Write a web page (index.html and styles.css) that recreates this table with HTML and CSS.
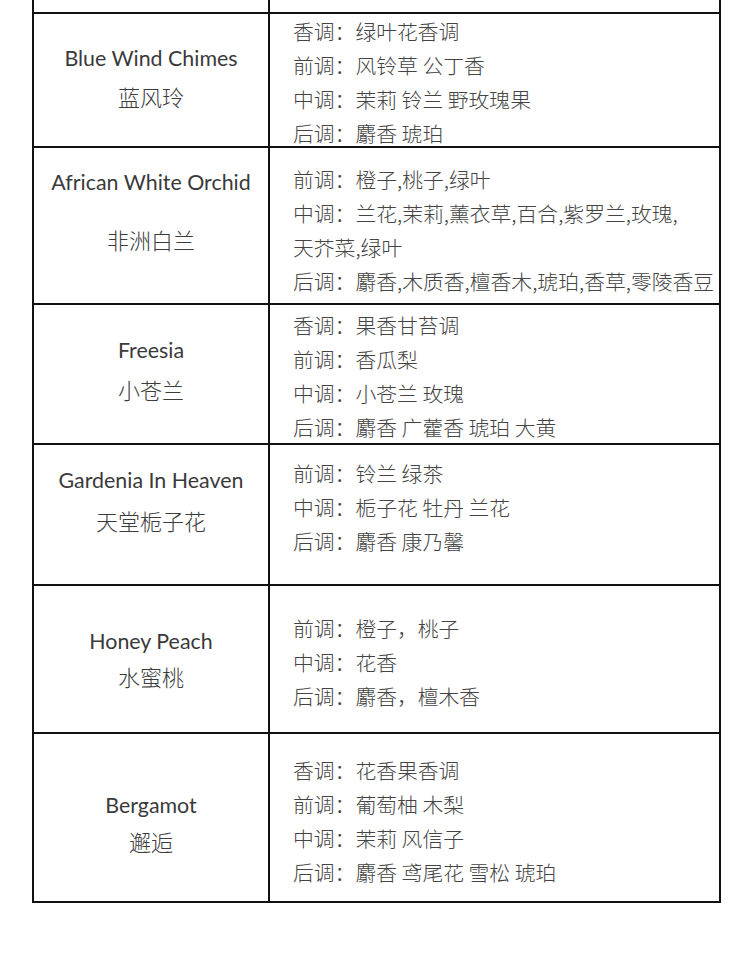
FILE: index.html
```html
<!DOCTYPE html>
<html lang="zh-CN">
<head>
<meta charset="utf-8">
<title>香调表</title>
<link rel="stylesheet" href="styles.css">
</head>
<body>
<div class="table">
  <div class="row row-0">
    <div class="name"></div>
    <div class="notes"></div>
  </div>
  <div class="row row-1">
    <div class="name">
      <div class="en">Blue Wind Chimes</div>
      <div class="zh">蓝风玲</div>
    </div>
    <div class="notes">
      <div class="line">香调：绿叶花香调</div>
      <div class="line">前调：风铃草 公丁香</div>
      <div class="line">中调：茉莉 铃兰 野玫瑰果</div>
      <div class="line">后调：麝香 琥珀</div>
    </div>
  </div>
  <div class="row row-2">
    <div class="name">
      <div class="en">African White Orchid</div>
      <div class="zh">非洲白兰</div>
    </div>
    <div class="notes">
      <div class="line">前调：橙子,桃子,绿叶</div>
      <div class="line">中调：兰花,茉莉,薰衣草,百合,紫罗兰,玫瑰,</div>
      <div class="line">天芥菜,绿叶</div>
      <div class="line">后调：麝香,木质香,檀香木,琥珀,香草,零陵香豆</div>
    </div>
  </div>
  <div class="row row-3">
    <div class="name">
      <div class="en">Freesia</div>
      <div class="zh">小苍兰</div>
    </div>
    <div class="notes">
      <div class="line">香调：果香甘苔调</div>
      <div class="line">前调：香瓜梨</div>
      <div class="line">中调：小苍兰 玫瑰</div>
      <div class="line">后调：麝香 广藿香 琥珀 大黄</div>
    </div>
  </div>
  <div class="row row-4">
    <div class="name">
      <div class="en">Gardenia In Heaven</div>
      <div class="zh">天堂栀子花</div>
    </div>
    <div class="notes">
      <div class="line">前调：铃兰 绿茶</div>
      <div class="line">中调：栀子花 牡丹 兰花</div>
      <div class="line">后调：麝香 康乃馨</div>
    </div>
  </div>
  <div class="row row-5">
    <div class="name">
      <div class="en">Honey Peach</div>
      <div class="zh">水蜜桃</div>
    </div>
    <div class="notes">
      <div class="line">前调：橙子，桃子</div>
      <div class="line">中调：花香</div>
      <div class="line">后调：麝香，檀木香</div>
    </div>
  </div>
  <div class="row row-6">
    <div class="name">
      <div class="en">Bergamot</div>
      <div class="zh">邂逅</div>
    </div>
    <div class="notes">
      <div class="line">香调：花香果香调</div>
      <div class="line">前调：葡萄柚 木梨</div>
      <div class="line">中调：茉莉 风信子</div>
      <div class="line">后调：麝香 鸢尾花 雪松 琥珀</div>
    </div>
  </div>
</div>
</body>
</html>
```

FILE: styles.css
```css
html, body {
  margin: 0;
  padding: 0;
  background: #ffffff;
}

body {
  font-family: "Lato", "Noto Sans CJK SC", sans-serif;
  width: 750px;
  height: 956px;
  overflow: hidden;
}

.table {
  margin-left: 32px;
  width: 689px;
  box-sizing: border-box;
  border-left: 2px solid #111;
  border-right: 2px solid #111;
  border-bottom: 2px solid #111;
}

.row {
  display: grid;
  grid-template-columns: 236px 1fr;
  box-sizing: border-box;
  border-top: 2px solid #111;
}

.row-0 { height: 12px; border-top: none; }
.row-1 { height: 134px; }
.row-2 { height: 157px; }
.row-3 { height: 140px; }
.row-4 { height: 141px; }
.row-5 { height: 148px; }
.row-6 { height: 169px; }

.name {
  border-right: 2px solid #111;
  text-align: center;
}

.en {
  font-family: "Lato", sans-serif;
  font-weight: 400;
  font-size: 21.4px;
  line-height: 30px;
  color: #3a3a3a;
}

.zh {
  font-family: "Noto Sans CJK SC", sans-serif;
  font-weight: 300;
  font-size: 22px;
  line-height: 30px;
  color: #3c3c3c;
}

.notes {
  padding-left: 23px;
  font-family: "Noto Sans CJK SC", sans-serif;
  font-weight: 300;
  font-size: 20.8px;
  line-height: 34px;
  color: #444444;
}

.line {
  white-space: nowrap;
}

.row-1 .name { padding-top: 29px; }
.row-1 .zh { margin-top: 8px; }
.row-1 .notes { padding-top: 0; }

.row-2 .name { padding-top: 19px; }
.row-2 .zh { margin-top: 27px; }
.row-2 .notes { padding-top: 14px; }

.row-3 .name { padding-top: 30px; }
.row-3 .zh { margin-top: 9px; }
.row-3 .notes { padding-top: 3px; }

.row-4 .name { padding-top: 20px; }
.row-4 .zh { margin-top: 10px; }
.row-4 .notes { padding-top: 11px; }

.row-5 .name { padding-top: 40px; }
.row-5 .zh { margin-top: 5px; }
.row-5 .notes { padding-top: 25px; }

.row-6 .name { padding-top: 56px; }
.row-6 .zh { margin-top: 6px; }
.row-6 .notes { padding-top: 19px; }
```
